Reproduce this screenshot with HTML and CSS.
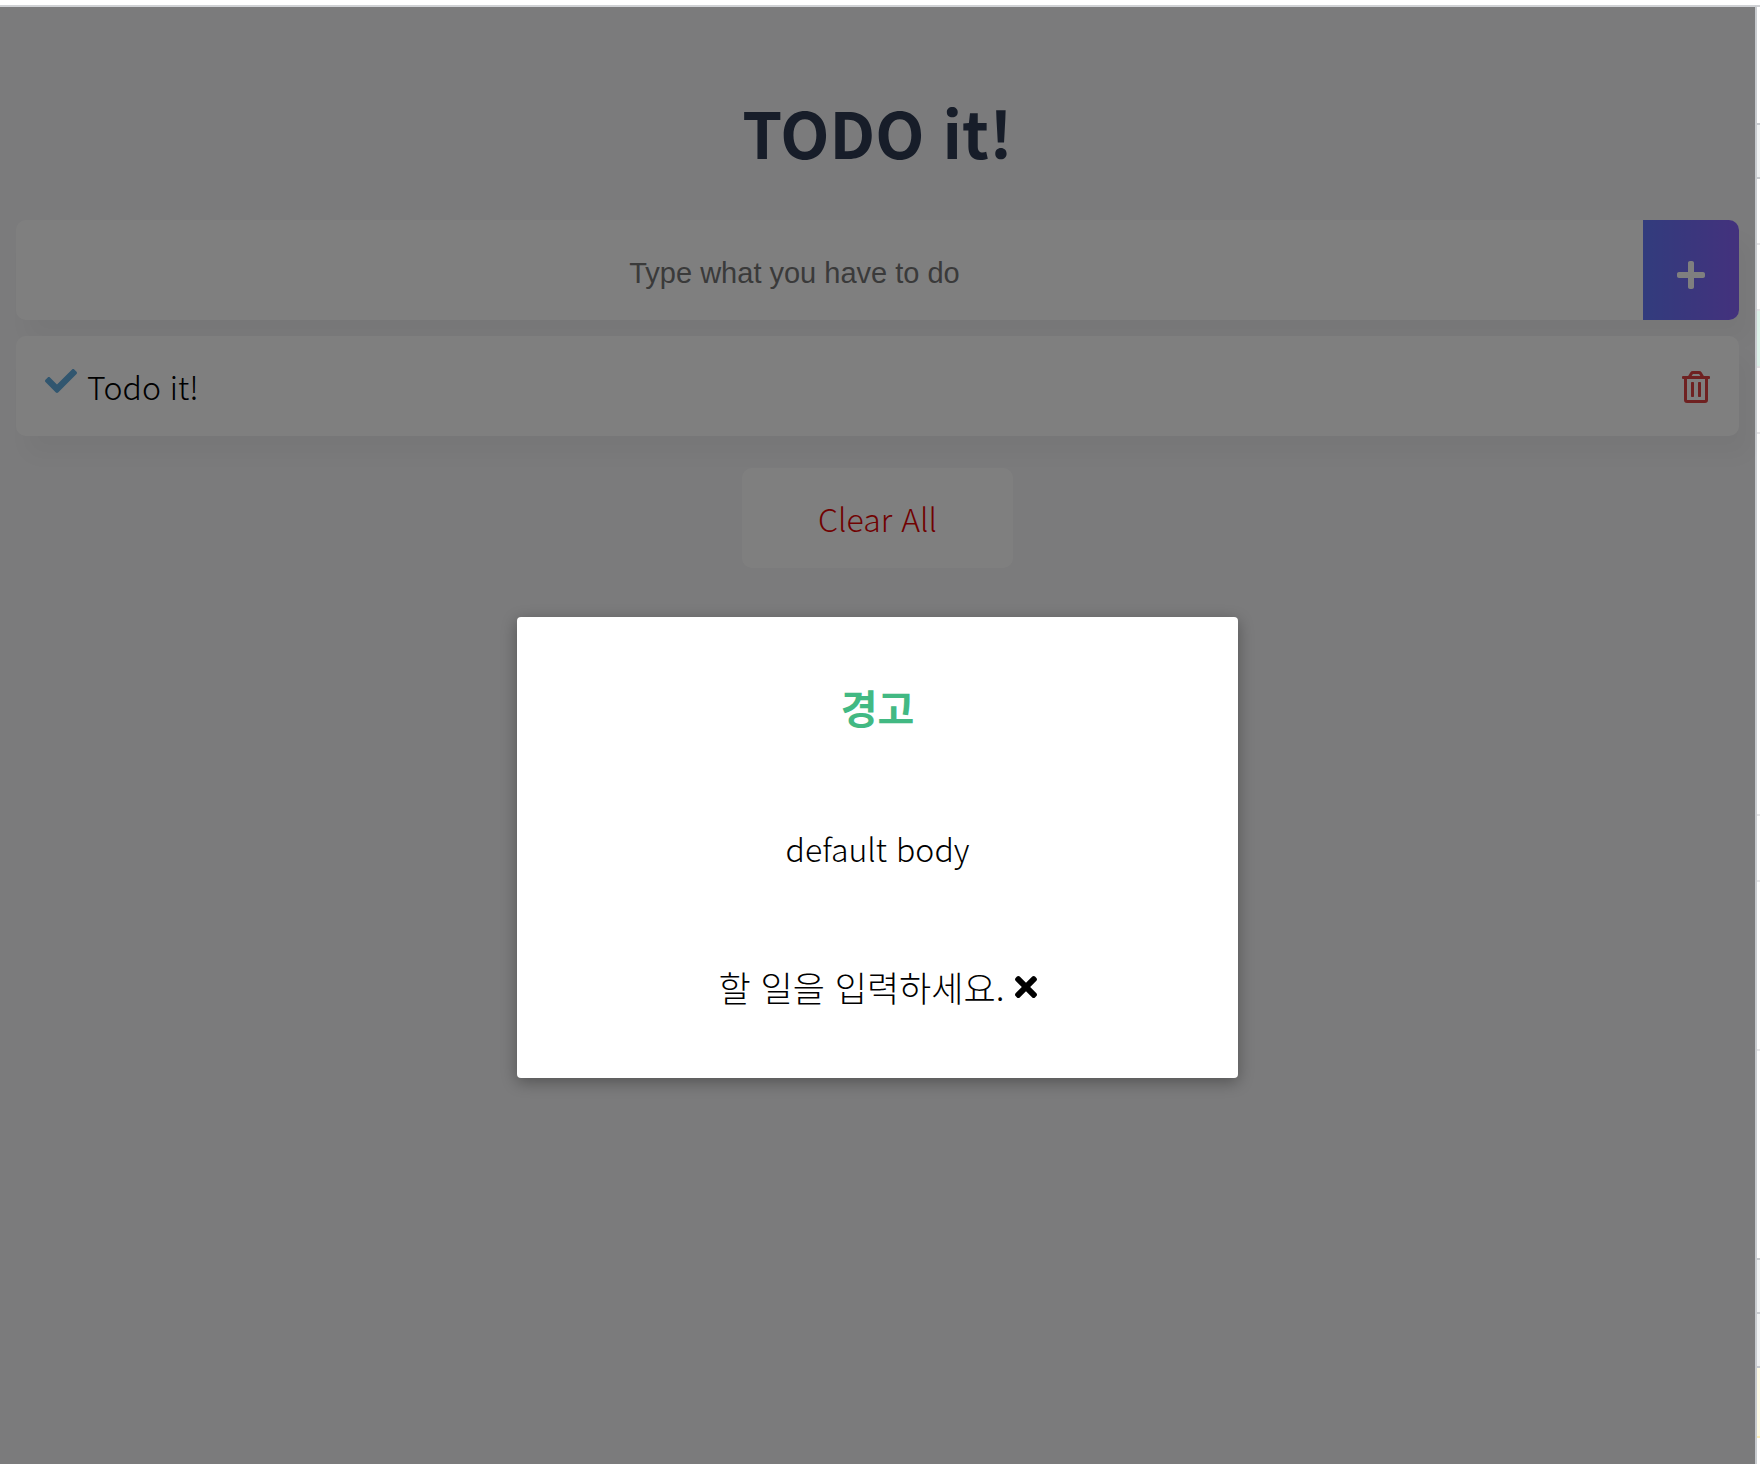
FILE: index.html
```html
<!DOCTYPE html>
<html lang="ko">
<head>
    <meta charset="UTF-8">
    <meta name="viewport" content="width=device-width, initial-scale=1.0">
    <title>TODO it!</title>
    <link rel="stylesheet" href="styles.css">
</head>
<body>
    <div class="window">
        <div class="viewport">
            <main class="app">
                <h1>TODO it!</h1>
                <form class="inputBox">
                    <input type="text" class="todoInput" placeholder="Type what you have to do" aria-label="Todo">
                    <button type="button" class="addBtn" aria-label="Add">
                        <svg viewBox="0 0 448 512" width="28" height="32"><path d="M416 208H272V64c0-17.670-14.330-32-32-32h-32c-17.670 0-32 14.330-32 32v144H32c-17.670 0-32 14.330-32 32v32c0 17.670 14.330 32 32 32h144v144c0 17.670 14.330 32 32 32h32c17.670 0 32-14.330 32-32V304h144c17.670 0 32-14.330 32-32v-32c0-17.670-14.330-32-32-32z"/></svg>
                    </button>
                </form>
                <ul class="todoList">
                    <li>
                        <svg class="checkBtn" viewBox="0 0 512 512" width="32" height="32"><path d="M173.898 439.404l-166.400-166.400c-9.997-9.997-9.997-26.206 0-36.204l36.203-36.204c9.997-9.998 26.207-9.998 36.204 0L192 312.690 432.095 72.596c9.997-9.997 26.207-9.997 36.204 0l36.203 36.204c9.997 9.997 9.997 26.206 0 36.204l-294.400 294.401c-9.998 9.997-26.207 9.997-36.204-.001z"/></svg>
                        <span>Todo it!</span>
                        <button type="button" class="removeBtn" aria-label="Remove">
                            <svg viewBox="0 0 448 512" width="28" height="32"><path d="M268 416h24a12 12 0 0 0 12-12V188a12 12 0 0 0-12-12h-24a12 12 0 0 0-12 12v216a12 12 0 0 0 12 12zM432 80h-82.410l-34-56.700A48 48 0 0 0 274.410 0H173.590a48 48 0 0 0-41.160 23.300L98.410 80H16A16 16 0 0 0 0 96v16a16 16 0 0 0 16 16h16v336a48 48 0 0 0 48 48h288a48 48 0 0 0 48-48V128h16a16 16 0 0 0 16-16V96a16 16 0 0 0-16-16zM171.840 50.910A6 6 0 0 1 177 48h94a6 6 0 0 1 5.150 2.910L293.610 80H154.390zM368 464H80V128h288zm-212-48h24a12 12 0 0 0 12-12V188a12 12 0 0 0-12-12h-24a12 12 0 0 0-12 12v216a12 12 0 0 0 12 12z"/></svg>
                        </button>
                    </li>
                </ul>
                <button type="button" class="clearBtn">Clear All</button>
            </main>
            <div class="modalMask">
                <div class="modal" role="dialog" aria-labelledby="modalTitle">
                    <h3 id="modalTitle">경고</h3>
                    <div class="modalBody">default body</div>
                    <div class="modalFooter">
                        <span>할 일을 입력하세요.</span>
                        <button type="button" class="closeBtn" aria-label="Close">
                            <svg viewBox="0 0 352 512" width="22" height="32"><path d="M242.720 256l100.070-100.070c12.280-12.280 12.280-32.190 0-44.480l-22.240-22.240c-12.280-12.280-32.190-12.280-44.480 0L176 189.280 75.930 89.210c-12.280-12.280-32.190-12.280-44.480 0L9.210 111.450c-12.280 12.280-12.280 32.190 0 44.480L109.280 256 9.210 356.070c-12.280 12.280-12.280 32.190 0 44.480l22.240 22.240c12.280 12.280 32.200 12.280 44.480 0L176 322.720l100.070 100.070c12.280 12.280 32.200 12.280 44.480 0l22.240-22.240c12.280-12.280 12.280-32.190 0-44.480L242.720 256z"/></svg>
                        </button>
                    </div>
                </div>
            </div>
        </div>
        <!-- edge of the docked panel -->
        <div class="devtools">
            <div class="panel panelTop"></div>
            <div class="panel toolbar"></div>
            <div class="row"></div>
            <div class="row"></div>
            <div class="row selected"></div>
            <div class="row"></div>
            <div class="row tall"></div>
            <div class="row"></div>
            <div class="row medium"></div>
            <div class="panel panelBottom"></div>
            <div class="panel toolbar"></div>
            <div class="panel toolbar"></div>
            <div class="row warning"></div>
        </div>
    </div>
</body>
</html>
```
FILE: styles.css
```css
* {
    box-sizing: border-box;
}
body {
    margin: 0;
    background-color: white;
    font-family: "Noto Sans CJK KR", sans-serif;
    font-weight: 300;
    font-size: 32px;
}
button {
    border: none;
    padding: 0;
    background: none;
    font: inherit;
}
svg {
    display: block;
    fill: currentColor;
}
.window {
    display: flex;
    height: 100vh;
    padding-top: 5px;
}
.viewport {
    position: relative;
    flex: 1;
    border-top: 2px solid #d0d2d5;
    background-color: #f6f6f8;
}
.app {
    padding: 82px 16px 0;
    text-align: center;
}
h1 {
    margin: 0 0 46px;
    color: #2f3b52;
    font-size: 64px;
    font-weight: 700;
    line-height: 85px;
}
.inputBox {
    display: flex;
    height: 100px;
    border-radius: 10px;
    background-color: white;
    box-shadow: 10px 20px 20px rgba(0, 0, 0, 0.03);
}
.todoInput {
    flex: 1;
    min-width: 0;
    border: none;
    padding: 6px 70px 0 0;
    background: none;
    font-family: "Liberation Sans", Arial, sans-serif;
    font-size: 29px;
    text-align: center;
}
.todoInput::placeholder {
    color: #757575;
}
.addBtn {
    display: flex;
    align-items: center;
    justify-content: center;
    width: 96px;
    padding-top: 10px;
    border-radius: 0 10px 10px 0;
    background: linear-gradient(to right, #6478fb, #8763fb);
    color: white;
}
.todoList {
    margin: 16px 0 32px;
    padding: 0;
    list-style: none;
}
.todoList li {
    display: flex;
    align-items: center;
    gap: 10px;
    height: 100px;
    padding: 0 29px;
    border-radius: 10px;
    background-color: white;
    box-shadow: 10px 20px 20px rgba(0, 0, 0, 0.03);
}
.checkBtn {
    margin-bottom: 10px;
    color: #62acde;
}
.removeBtn {
    margin-left: auto;
    padding-top: 2px;
    color: #de4343;
}
.clearBtn {
    height: 100px;
    padding: 0 76px;
    border-radius: 10px;
    background-color: white;
    color: #e20303;
}
.modalMask {
    position: absolute;
    inset: 0;
    display: flex;
    align-items: center;
    justify-content: center;
    padding-top: 224px;
    background-color: rgba(0, 0, 0, 0.5);
}
.modal {
    width: 721px;
    padding: 67px 60px 68px;
    border-radius: 4px;
    background-color: white;
    box-shadow: 0 4px 16px rgba(0, 0, 0, 0.33);
    line-height: 46px;
    text-align: center;
}
.modal h3 {
    margin: 0;
    color: #42b983;
    font-size: 40px;
    font-weight: 700;
}
.modalBody {
    margin: 95px 0 93px;
}
.modalFooter {
    display: flex;
    align-items: center;
    justify-content: center;
    gap: 10px;
    font-size: 35px;
}
.devtools {
    width: 5px;
    border-top: 2px solid #d0d2d5;
    border-left: 2px solid #cacdd1;
}
.panel {
    border-bottom: 2px solid #cacdd1;
}
.panelTop {
    height: 118px;
}
.panelBottom {
    height: 209px;
}
.toolbar {
    height: 54px;
    background-color: #f1f3f4;
}
.row {
    height: 66px;
    border-bottom: 2px solid #e8e8ea;
}
.selected {
    height: 57px;
    background-color: #e0f5ec;
}
.medium {
    height: 169px;
}
.tall {
    height: 382px;
}
.warning {
    height: 70px;
    border-bottom-color: #fff0b8;
    background-color: #fffbe5;
}
```
